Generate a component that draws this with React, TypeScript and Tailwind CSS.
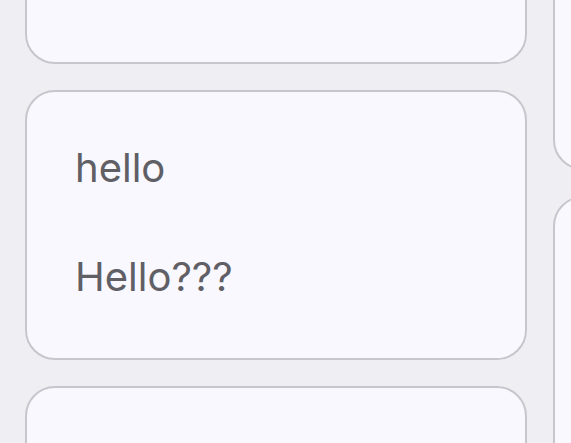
export default function App() {
  return (
    <div className="w-[571px] h-[443px] overflow-hidden bg-[#eeeef3] font-['Inter',Arial,sans-serif]">
      <div className="flex gap-[26px] pl-[25px] -mt-[40px]">
        <div className="flex flex-col gap-[26px] w-[502px] shrink-0">
          <div className="h-[104px] rounded-[30px] border-2 border-[#c6c6cd] bg-[#f8f8fe]" />
          <div className="h-[270px] rounded-[30px] border-2 border-[#c6c6cd] bg-[#f8f8fe] pl-[48px] pr-6 pt-[52px] text-[40px] leading-[48px] text-[#5f5f65]">
            <p>hello</p>
            <p className="mt-[61px]">Hello???</p>
          </div>
          <div className="h-[200px] rounded-[30px] border-2 border-[#c6c6cd] bg-[#f8f8fe]" />
        </div>
        <div className="flex flex-col gap-[26px] w-[502px] shrink-0">
          <div className="h-[210px] rounded-[30px] border-2 border-[#c6c6cd] bg-[#f8f8fe]" />
          <div className="h-[300px] rounded-[30px] border-2 border-[#c6c6cd] bg-[#f8f8fe]" />
        </div>
      </div>
    </div>
  );
}
